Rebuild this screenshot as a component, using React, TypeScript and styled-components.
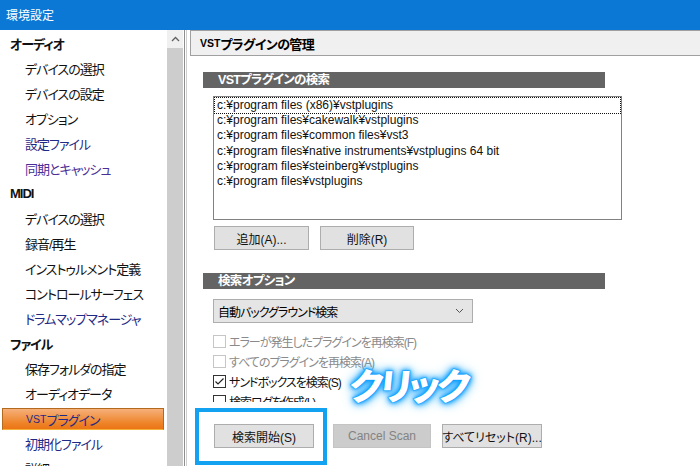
import React from "react";
import styled, { createGlobalStyle } from "styled-components";

const GlobalStyle = createGlobalStyle`
  html, body {
    margin: 0;
    padding: 0;
    background: #fff;
  }
  body {
    font-family: "Liberation Sans", "Noto Sans CJK JP", sans-serif;
    font-feature-settings: "palt";
    color: #000;
  }
`;

const Window = styled.div`
  position: relative;
  width: 700px;
  height: 466px;
  display: flex;
  flex-direction: column;
  overflow: hidden;
  background: #fff;
`;

const TitleBar = styled.div`
  flex: none;
  height: 30px;
  box-sizing: border-box;
  padding: 0 0 2px 6px;
  display: flex;
  align-items: center;
  background: #0b78d5;
  color: #fff;
  font-size: 12px;
`;

const Body = styled.div`
  flex: 1;
  min-height: 0;
  display: flex;
`;

const Sidebar = styled.div`
  flex: none;
  width: 185px;
  box-sizing: border-box;
  display: flex;
  border-right: 1px solid #8e8e8e;
`;

const NavList = styled.div`
  width: 167px;
  flex: none;
  padding-top: 1px;
`;

type Tone = "plain" | "link" | "visited";

const NavRow = styled.div<{ $head?: boolean; $selected?: boolean; $tone?: Tone }>`
  height: ${(p) => (p.$selected ? "22px" : "25px")};
  box-sizing: border-box;
  display: flex;
  align-items: center;
  white-space: nowrap;
  font-size: 13px;
  letter-spacing: -1px;
  font-weight: ${(p) => (p.$head ? 700 : 400)};
  padding-left: ${(p) => (p.$head ? "10px" : p.$selected ? "23px" : "25px")};
  margin: ${(p) => (p.$selected ? "2px 3px 1px 2px" : "0")};
  color: ${(p) => (p.$tone === "link" ? "#1f2a86" : p.$tone === "visited" ? "#4a2f98" : "#111")};
  ${(p) =>
    p.$selected &&
    `
    border: 1px solid #b46a1e;
    border-bottom-color: #f3b23a;
    background: linear-gradient(#f6b07a 0%, #f29a52 35%, #ee8428 70%, #ec7414 100%);
    color: #1f2a86;
  `}
`;

const Small = styled.span`
  font-size: 10.5px;
  letter-spacing: 0;
`;

const ScrollBar = styled.div`
  width: 16px;
  flex: none;
  display: flex;
  flex-direction: column;
  background: #cdcdcd;
`;

const ScrollArrow = styled.div`
  height: 18px;
  flex: none;
  display: flex;
  align-items: center;
  justify-content: center;
  background: #f0f0f0;
`;

const Main = styled.div`
  flex: 1;
  min-width: 0;
  margin-left: 1px;
  border-left: 1px solid #cfcfcf;
  padding-left: 3px;
  display: flex;
  flex-direction: column;
`;

const PageHeader = styled.div`
  height: 26px;
  box-sizing: border-box;
  margin-right: -2px;
  border: 1px solid #a0a0a0;
  background: #f0f0f0;
  padding-left: 9px;
  display: flex;
  align-items: center;
  font-size: 13px;
  font-weight: 700;
  letter-spacing: -0.6px;
`;

const Content = styled.div`
  padding-left: 13px;
  display: flex;
  flex-direction: column;
  align-items: flex-start;
`;

const SectionBar = styled.div<{ $top: number }>`
  width: 402px;
  height: 16px;
  margin-top: ${(p) => p.$top}px;
  padding-left: 15px;
  box-sizing: border-box;
  background: #646464;
  color: #fff;
  font-size: 12.5px;
  font-weight: 700;
  letter-spacing: -0.7px;
  line-height: 16px;
`;

const ListBox = styled.div`
  margin: 8px 0 0 10px;
  width: 409px;
  height: 124px;
  box-sizing: border-box;
  border: 1px solid #828282;
  padding: 1px 1px 0;
  background: #fff;
`;

const ListItem = styled.div<{ $focused?: boolean }>`
  height: 15.2px;
  line-height: 15.2px;
  padding-left: 2px;
  font-size: 12px;
  white-space: nowrap;
  color: #111;
  ${(p) => p.$focused && `outline: 1px dotted #111; outline-offset: 0px;`}
`;

const ButtonRow = styled.div<{ $top: number }>`
  display: flex;
  gap: 11px;
  margin: ${(p) => p.$top}px 0 0 11px;
`;

const Button = styled.div<{ $w: number; $disabled?: boolean }>`
  width: ${(p) => p.$w}px;
  height: 24px;
  box-sizing: border-box;
  display: flex;
  align-items: center;
  justify-content: center;
  font-size: 12px;
  white-space: nowrap;
  border: 1px solid ${(p) => (p.$disabled ? "#c4c4c4" : "#adadad")};
  background: ${(p) => (p.$disabled ? "#cccccc" : "#e1e1e1")};
  color: ${(p) => (p.$disabled ? "#838383" : "#111")};
  &:first-child {
    margin-right: ${(p) => (p.$w === 100 ? 8 : 0)}px;
  }
`;

const Select = styled.div`
  margin: 10px 0 0 10px;
  width: 260px;
  height: 24px;
  box-sizing: border-box;
  border: 1px solid #adadad;
  background: #e5e5e5;
  padding: 0 8px 0 4px;
  display: flex;
  align-items: center;
  justify-content: space-between;
  font-size: 12px;
  letter-spacing: -1px;
`;

const CheckList = styled.div`
  margin: 8px 0 0 10px;
  display: flex;
  flex-direction: column;
`;

const CheckRow = styled.div<{ $disabled?: boolean }>`
  height: 20px;
  display: flex;
  align-items: center;
  gap: 2px;
  font-size: 12px;
  letter-spacing: -1px;
  white-space: nowrap;
  color: ${(p) => (p.$disabled ? "#8a8a8a" : "#111")};
`;

const Box = styled.span<{ $disabled?: boolean }>`
  width: 13px;
  height: 13px;
  margin-right: 1px;
  box-sizing: border-box;
  border: 1px solid ${(p) => (p.$disabled ? "#c6c6c6" : "#333")};
  background: #fff;
  display: flex;
  align-items: center;
  justify-content: center;
`;

const Highlight = styled.div`
  position: absolute;
  left: 195px;
  top: 408px;
  width: 132px;
  height: 57px;
  box-sizing: border-box;
  border: 4px solid #13a2f2;
  box-shadow: 0 -6px 0 0 #fff;
`;

const ClickLabel = styled.div`
  position: absolute;
  left: 350px;
  top: 364px;
  font-family: "Noto Sans CJK JP", sans-serif;
  font-size: 37px;
  font-weight: 900;
  line-height: 40px;
  color: #fff;
  letter-spacing: -3px;
  white-space: nowrap;
  transform: skewX(-6deg);
  -webkit-text-stroke: 1.5px #5cc6ff;
  paint-order: stroke fill;
  text-shadow: 0 0 2px #0b9cff, 0 0 4px #0b9cff, 0 0 6px #0b9cff, 0 0 9px #1aa8ff, 0 0 13px #4cbcff;
`;

const nav: { label: React.ReactNode; head?: boolean; selected?: boolean; tone?: Tone }[] = [
  { label: "オーディオ", head: true },
  { label: "デバイスの選択" },
  { label: "デバイスの設定" },
  { label: "オプション" },
  { label: "設定ファイル", tone: "link" },
  { label: "同期とキャッシュ", tone: "visited" },
  { label: "MIDI", head: true },
  { label: "デバイスの選択" },
  { label: "録音/再生" },
  { label: "インストゥルメント定義" },
  { label: "コントロールサーフェス" },
  { label: "ドラムマップマネージャ", tone: "link" },
  { label: "ファイル", head: true },
  { label: "保存フォルダの指定" },
  { label: "オーディオデータ" },
  { label: <><Small>VST</Small>プラグイン</>, selected: true },
  { label: "初期化ファイル", tone: "link" },
  { label: "詳細" },
];

const paths = [
  "c:¥program files (x86)¥vstplugins",
  "c:¥program files¥cakewalk¥vstplugins",
  "c:¥program files¥common files¥vst3",
  "c:¥program files¥native instruments¥vstplugins 64 bit",
  "c:¥program files¥steinberg¥vstplugins",
  "c:¥program files¥vstplugins",
];

const checks = [
  { label: "エラーが発生したプラグインを再検索(F)", disabled: true },
  { label: "すべてのプラグインを再検索(A)", disabled: true },
  { label: "サンドボックスを検索(S)", checked: true },
  { label: "検索ログを作成(L)" },
];

export default function App() {
  return (
    <Window>
      <GlobalStyle />
      <TitleBar>環境設定</TitleBar>
      <Body>
        <Sidebar>
          <NavList>
            {nav.map((n, i) => (
              <NavRow key={i} $head={n.head} $selected={n.selected} $tone={n.tone}>
                {n.label}
              </NavRow>
            ))}
          </NavList>
          <ScrollBar>
            <ScrollArrow>
              <svg width="9" height="6" viewBox="0 0 9 6">
                <polyline points="1,5 4.5,1.5 8,5" fill="none" stroke="#606060" strokeWidth="1.3" />
              </svg>
            </ScrollArrow>
          </ScrollBar>
        </Sidebar>
        <Main>
          <PageHeader>
            <Small>VST</Small>プラグインの管理
          </PageHeader>
          <Content>
            <SectionBar $top={16}>VSTプラグインの検索</SectionBar>
            <ListBox>
              {paths.map((p, i) => (
                <ListItem key={i} $focused={i === 0}>
                  {p}
                </ListItem>
              ))}
            </ListBox>
            <ButtonRow $top={6}>
              <Button $w={95}>追加(A)...</Button>
              <Button $w={94}>削除(R)</Button>
            </ButtonRow>
            <SectionBar $top={23}>検索オプション</SectionBar>
            <Select>
              <span>自動バックグラウンド検索</span>
              <svg width="9" height="6" viewBox="0 0 9 6">
                <polyline points="1,1 4.5,4.5 8,1" fill="none" stroke="#555" strokeWidth="1" />
              </svg>
            </Select>
            <CheckList>
              {checks.map((c, i) => (
                <CheckRow key={i} $disabled={c.disabled}>
                  <Box $disabled={c.disabled}>
                    {c.checked && (
                      <svg width="11" height="11" viewBox="0 0 11 11">
                        <polyline points="1.5,5.5 4,8 9.5,2.5" fill="none" stroke="#222" strokeWidth="1.2" />
                      </svg>
                    )}
                  </Box>
                  {c.label}
                </CheckRow>
              ))}
            </CheckList>
            <ButtonRow $top={13}>
              <Button $w={100}>検索開始(S)</Button>
              <Button $w={98} $disabled>
                Cancel Scan
              </Button>
              <Button $w={100}>すべてリセット(R)...</Button>
            </ButtonRow>
          </Content>
        </Main>
      </Body>
      <Highlight />
      <ClickLabel>クリック</ClickLabel>
    </Window>
  );
}
